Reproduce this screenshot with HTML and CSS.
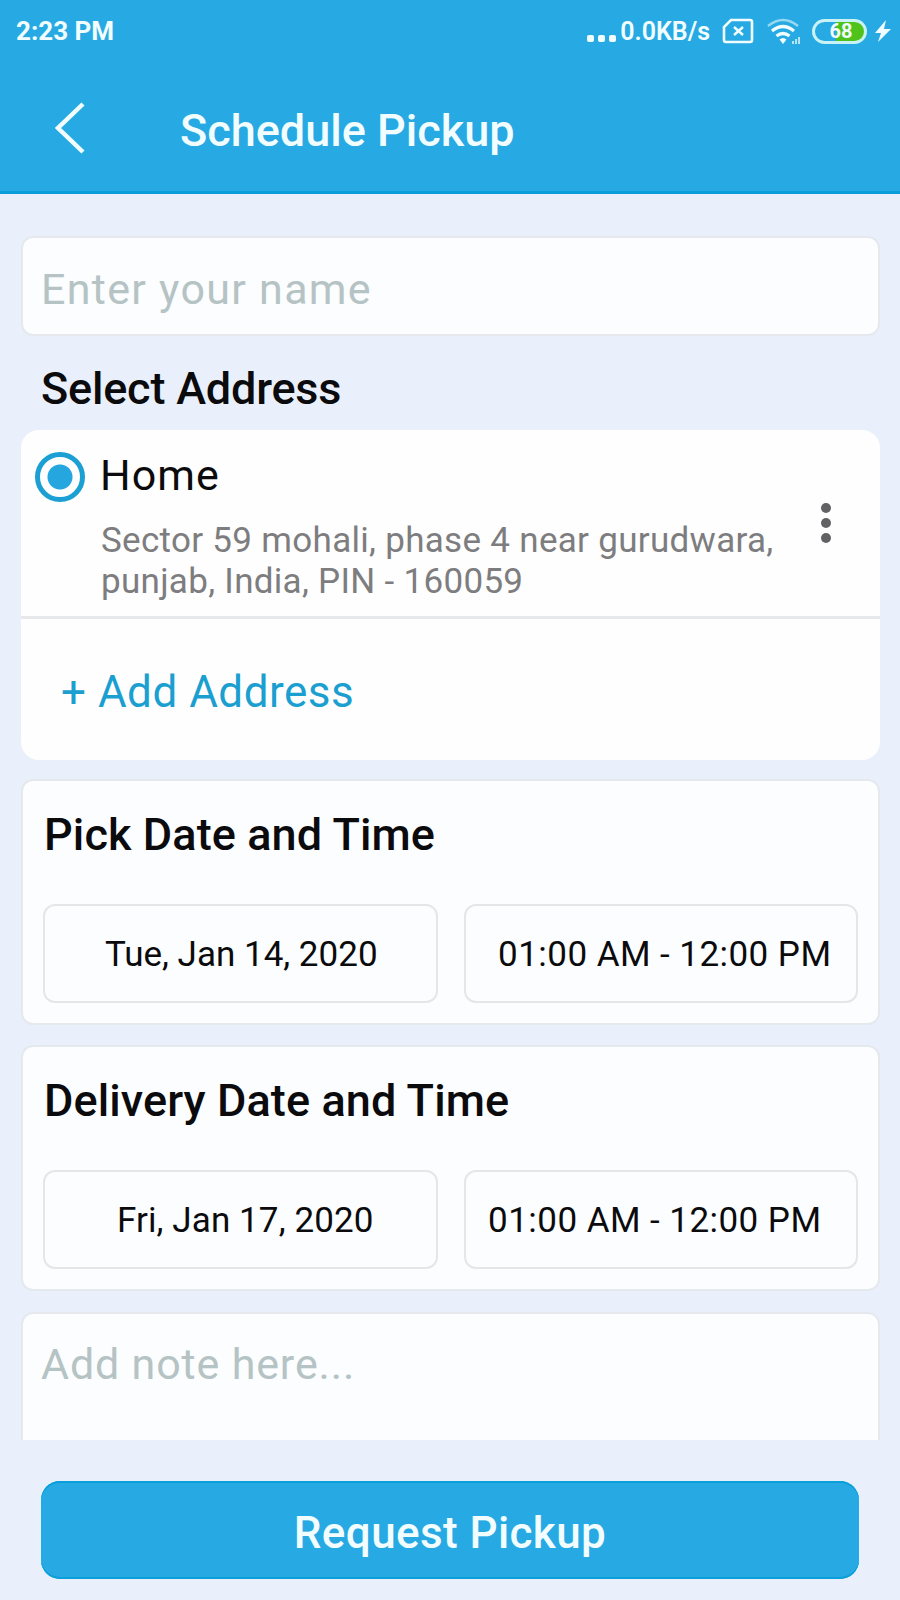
FILE: index.html
```
<!DOCTYPE html>
<html lang="en">
<head>
    <meta charset="UTF-8">
    <meta name="viewport" content="width=device-width, initial-scale=1.0">
    <title>Schedule Pickup</title>
    <link rel="stylesheet" href="styles.css">
</head>
<body>
    <header class="header">
        <div class="status-bar">
            <span class="time">2:23 PM</span>
            <div class="status-icons">
                <span class="dots"><i></i><i></i><i></i></span>
                <span class="speed">0.0KB/s</span>
                <svg class="sim" width="32" height="26" viewBox="0 0 32 26" fill="none" stroke="currentColor">
                    <path d="M9 2h19q2 0 2 2v18q0 2-2 2H4q-2 0-2-2V9z" stroke-width="2.6"/>
                    <path d="M12 9l9 8M21 9l-9 8" stroke-width="2.4"/>
                </svg>
                <svg class="wifi" width="36" height="28" viewBox="0 0 36 28" fill="none" stroke="currentColor">
                    <path d="M2 8q15-12 30 0" stroke-width="2.4" opacity="0.55"/>
                    <path d="M6 13q11-9 22 0" stroke-width="3.2"/>
                    <path d="M10.500 18q6.500-5 13 0" stroke-width="3.2"/>
                    <path d="M13.500 21.500q3.500-3 7 0L17 26z" fill="currentColor" stroke="none"/>
                    <path d="M27 26v-3M30 26v-5M33 26v-7" stroke-width="2" opacity="0.7"/>
                </svg>
                <span class="battery">68</span>
                <svg class="bolt" width="16" height="24" viewBox="0 0 16 24" fill="currentColor">
                    <path d="M11 1L0 14h6L3 23 16 10H9z"/>
                </svg>
            </div>
        </div>
        <div class="title-bar">
            <svg class="back" width="34" height="54" viewBox="0 0 34 54" fill="none" stroke="currentColor" stroke-width="4.500">
                <path d="M29 3L4 27l25 24"/>
            </svg>
            <h1>Schedule Pickup</h1>
        </div>
    </header>

    <main class="content">
        <input class="field" type="text" placeholder="Enter your name">

        <h2 class="section-title">Select Address</h2>
        <div class="address-card">
            <div class="address">
                <span class="radio"></span>
                <div class="address-text">
                    <div class="address-name">Home</div>
                    <p>Sector 59 mohali, phase 4 near gurudwara,<br>punjab, India, PIN - 160059</p>
                </div>
                <svg class="more" width="12" height="42" viewBox="0 0 12 42" fill="currentColor">
                    <circle cx="6" cy="6" r="5"/>
                    <circle cx="6" cy="21" r="5"/>
                    <circle cx="6" cy="36" r="5"/>
                </svg>
            </div>
            <div class="add-address">+ Add Address</div>
        </div>

        <section class="card">
            <h2>Pick Date and Time</h2>
            <div class="slots">
                <div class="slot pick-date">Tue, Jan 14, 2020</div>
                <div class="slot pick-time">01:00 AM - 12:00 PM</div>
            </div>
        </section>

        <section class="card">
            <h2>Delivery Date and Time</h2>
            <div class="slots">
                <div class="slot delivery-date">Fri, Jan 17, 2020</div>
                <div class="slot delivery-time">01:00 AM - 12:00 PM</div>
            </div>
        </section>

        <textarea class="note" placeholder="Add note here..."></textarea>
    </main>

    <footer class="footer">
        <button class="request-btn">Request Pickup</button>
    </footer>
</body>
</html>
```
FILE: styles.css
```
* {
    box-sizing: border-box;
}

body {
    margin: 0;
    height: 1600px;
    overflow: hidden;
    display: flex;
    flex-direction: column;
    font-family: Roboto, "Liberation Sans", sans-serif;
    background-color: #e9f0fb;
    color: #0b0b0d;
}

h1, h2, p {
    margin: 0;
}

h1, h2 {
    font-weight: 500;
    font-size: 45px;
    line-height: 60px;
}

.header {
    height: 194px;
    flex-shrink: 0;
    background-color: #27aae3;
    border-bottom: 3px solid #089fda;
    color: #f2fdff;
}

.status-bar {
    display: flex;
    justify-content: space-between;
    align-items: center;
    height: 62px;
    padding: 0 9px 0 16px;
}

.time {
    font-size: 26px;
    font-weight: 700;
    line-height: 62px;
}

.status-icons {
    display: flex;
    align-items: center;
}

.dots {
    display: flex;
    gap: 4px;
    padding: 14px 4px 0 0;
}

.dots i {
    width: 7px;
    height: 7px;
    border-radius: 2px;
    background: currentColor;
}

.speed {
    font-size: 25px;
    font-weight: 600;
    margin-right: 12px;
}

.sim {
    margin-right: 12px;
}

.wifi {
    margin: 2px 10px 0 0;
}

.battery {
    width: 55px;
    height: 25px;
    padding-left: 3px;
    border: 3px solid #c9f2f5;
    border-radius: 13px;
    background: linear-gradient(to right, #27aae3 42%, #4fc31c 42%);
    font-size: 20px;
    font-weight: 700;
    line-height: 19px;
    text-align: center;
    margin-right: 8px;
}

.title-bar {
    display: flex;
    align-items: center;
    padding: 2px 0 0 54px;
    height: 132px;
}

.title-bar h1 {
    margin: 4px 0 0 92px;
}

.back {
    margin-bottom: 2px;
}

.content {
    height: 1246px;
    flex-shrink: 0;
    overflow: hidden;
    padding: 42px 20px 0 21px;
}

.field, .note, .card {
    display: block;
    width: 100%;
    background-color: #fbfdfe;
    border: 2px solid #e5e9ee;
    border-radius: 12px;
}

.field, .note {
    font-family: inherit;
    font-size: 43px;
    outline: none;
    resize: none;
}

.field {
    height: 100px;
    padding: 5px 18px 0;
    letter-spacing: 1.3px;
}

.field::placeholder, .note::placeholder {
    color: #b5c3c4;
    opacity: 1;
}

.section-title {
    margin: 23px 0 11px 20px;
    letter-spacing: -0.2px;
}

.address-card {
    height: 330px;
    background-color: #fefefe;
    border-radius: 18px;
}

.address {
    display: flex;
    height: 189px;
    padding: 0 48px 0 14px;
    border-bottom: 3px solid #e6e8ea;
}

.radio {
    width: 50px;
    height: 50px;
    margin: 22px 15px 0 0;
    border: 5px solid #1c9fd3;
    border-radius: 50%;
    background: radial-gradient(circle, #25a6df 12px, transparent 13px);
}

.address-text {
    flex: 1;
}

.address-name {
    margin-top: 19px;
    font-size: 43px;
    line-height: 52px;
    letter-spacing: 1px;
}

.address-text p {
    margin: 19px 0 0 1px;
    font-size: 35px;
    line-height: 41px;
    letter-spacing: 0.3px;
    color: #7d7d7f;
    white-space: nowrap;
}

.more {
    margin-top: 72px;
    color: #626264;
}

.add-address {
    padding: 45px 0 0 40px;
    font-size: 44px;
    line-height: 56px;
    letter-spacing: 0.5px;
    color: #1b9fd0;
}

.card {
    height: 246px;
    margin-top: 19px;
    padding: 24px 20px 0;
}

.card + .card {
    margin-top: 20px;
}

.card h2 {
    padding-left: 1px;
    letter-spacing: 0.1px;
}

.slots {
    display: grid;
    grid-template-columns: 1fr 1fr;
    gap: 26px;
    margin-top: 39px;
}

.slot {
    height: 99px;
    border: 2px solid #e5e6e9;
    border-radius: 12px;
    font-size: 35px;
    line-height: 97px;
    text-align: center;
    white-space: nowrap;
}

.pick-date {
    padding-left: 2px;
}

.delivery-date {
    padding-left: 10px;
    letter-spacing: 0.1px;
}

.pick-time, .delivery-time {
    letter-spacing: 0.45px;
}

.pick-time {
    padding-left: 8px;
}

.delivery-time {
    padding-right: 12px;
}

.note {
    height: 200px;
    margin-top: 21px;
    padding: 25px 18px;
    letter-spacing: 0.85px;
}

.footer {
    padding: 41px 41px 0;
}

.request-btn {
    display: block;
    width: 100%;
    height: 98px;
    padding: 5px 0 0;
    border: none;
    border-radius: 19px;
    background-color: #27aae3;
    color: #f2fdff;
    font-family: inherit;
    font-size: 44px;
    font-weight: 500;
    letter-spacing: 0.4px;
    box-shadow: inset 0 2px #089fda, inset 0 -2px #089fda;
}
```
